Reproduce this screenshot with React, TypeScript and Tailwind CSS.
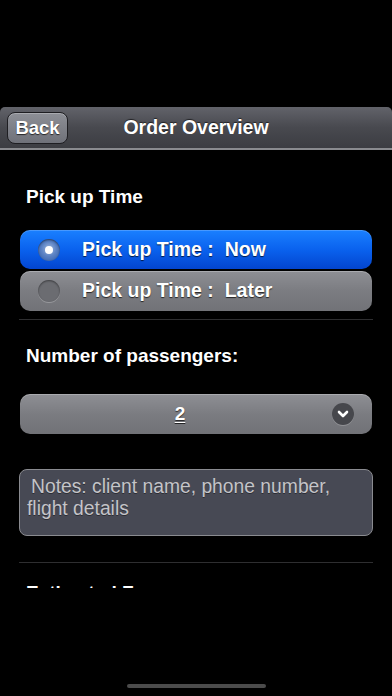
import React from "react";

const font = { fontFamily: '"Liberation Sans", Arial, sans-serif' };

function Radio({ selected }: { selected: boolean }) {
  if (selected) {
    return (
      <div className="w-[22px] h-[22px] rounded-full flex items-center justify-center bg-[radial-gradient(circle_at_50%_45%,#9fb8dd_0%,#5b82c4_45%,#2d5aa8_100%)] shadow-[inset_0_1px_2px_rgba(0,0,0,0.5)]">
        <div className="w-[8px] h-[8px] rounded-full bg-white" />
      </div>
    );
  }
  return (
    <div className="w-[22px] h-[22px] rounded-full bg-[#6b6c71] shadow-[inset_0_1px_2px_rgba(0,0,0,0.45),0_1px_0_rgba(255,255,255,0.25)]" />
  );
}

export default function App() {
  return (
    <div className="w-[392px] h-[696px] bg-black relative overflow-hidden" style={font}>
      <div className="h-[107px]" />
      {/* Nav bar */}
      <div className="h-[43px] rounded-t-[5px] bg-[linear-gradient(#62636a,#48494f_50%,#3c3d42)] border-b-2 border-[#8a8b8f] flex items-center relative">
        <div className="ml-[7px] w-[61px] h-[32px] rounded-[8px] border border-[#1e1e22] bg-[linear-gradient(#8d8f96,#6f7179)] shadow-[inset_0_1px_0_rgba(255,255,255,0.25)] flex items-center justify-center">
          <span className="text-white font-bold text-[18.5px] [text-shadow:0_1px_1px_rgba(0,0,0,0.7)]">Back</span>
        </div>
        <div className="absolute inset-0 flex items-center justify-center pointer-events-none">
          <span className="text-white font-bold text-[19.5px] [text-shadow:0_-1px_1px_rgba(0,0,0,0.6)]">Order Overview</span>
        </div>
      </div>
      {/* Content */}
      <div className="h-[438px] overflow-hidden px-5 pt-[37px]">
        <div className="h-[20px] leading-[20px] pl-[6px] text-white font-bold text-[19px]">Pick up Time</div>
        <div className="mt-[23px] h-[39px] rounded-[10px] bg-[linear-gradient(#1a80ff,#0a62ee_50%,#0345cf)] flex items-center shadow-[inset_0_1px_0_rgba(255,255,255,0.2)]">
          <div className="ml-[18px]"><Radio selected /></div>
          <span className="ml-[22px] text-white font-bold text-[19.5px] [text-shadow:0_1px_1px_rgba(0,0,0,0.7)] whitespace-pre">Pick up Time :  Now</span>
        </div>
        <div className="mt-[2px] h-[40px] rounded-[10px] bg-[linear-gradient(#8e8f94,#7b7c81_50%,#717277)] flex items-center shadow-[inset_0_1px_0_rgba(255,255,255,0.25)]">
          <div className="ml-[18px]"><Radio selected={false} /></div>
          <span className="ml-[22px] text-white font-bold text-[19.5px] [text-shadow:0_1px_1px_rgba(0,0,0,0.7)] whitespace-pre">Pick up Time :  Later</span>
        </div>
        <div className="mt-[8px] h-px bg-[#2e2e30] -mx-px" />
        <div className="mt-[26px] h-[20px] leading-[20px] pl-[6px] text-white font-bold text-[19px]">Number of passengers:</div>
        <div className="mt-[28px] h-[40px] rounded-[10px] bg-[linear-gradient(#8e8f94,#7b7c81_50%,#717277)] shadow-[inset_0_1px_0_rgba(255,255,255,0.25)] flex items-center relative">
          <div className="absolute inset-0 flex items-center justify-center pr-[32px]">
            <span className="text-white font-bold text-[19px] underline underline-offset-2 [text-shadow:0_1px_1px_rgba(0,0,0,0.7)]">2</span>
          </div>
          <div className="ml-auto mr-[18px] w-[22px] h-[22px] rounded-full bg-[#46474c] shadow-[0_1px_0_rgba(255,255,255,0.2)] flex items-center justify-center">
            <svg width="12" height="8" viewBox="0 0 12 8">
              <path d="M2 2 L6 6 L10 2" fill="none" stroke="white" strokeWidth="2.6" strokeLinecap="round" strokeLinejoin="round" />
            </svg>
          </div>
        </div>
        <div className="mt-[35px] -mx-px h-[67px] rounded-[8px] border border-[#8a8b90] bg-[#474954] pl-[11px] pt-[6px]">
          <div className="text-[#c4c4c8] text-[19.3px] leading-[22px] [text-shadow:0_1px_0_rgba(0,0,0,0.4)] whitespace-nowrap">
            Notes: client name, phone number,
            <br />
            <span className="-ml-[4px]">flight details</span>
          </div>
        </div>
        <div className="mt-[26px] h-px bg-[#2e2e30] -mx-px" />
        <div className="mt-[20px] h-[20px] leading-[20px] pl-[6px] text-white font-bold text-[19px]">Estimated Fare</div>
      </div>
      {/* Home indicator */}
      <div className="absolute left-[127px] bottom-[8px] w-[139px] h-[4px] rounded-full bg-[#4b4b4b]" />
    </div>
  );
}
